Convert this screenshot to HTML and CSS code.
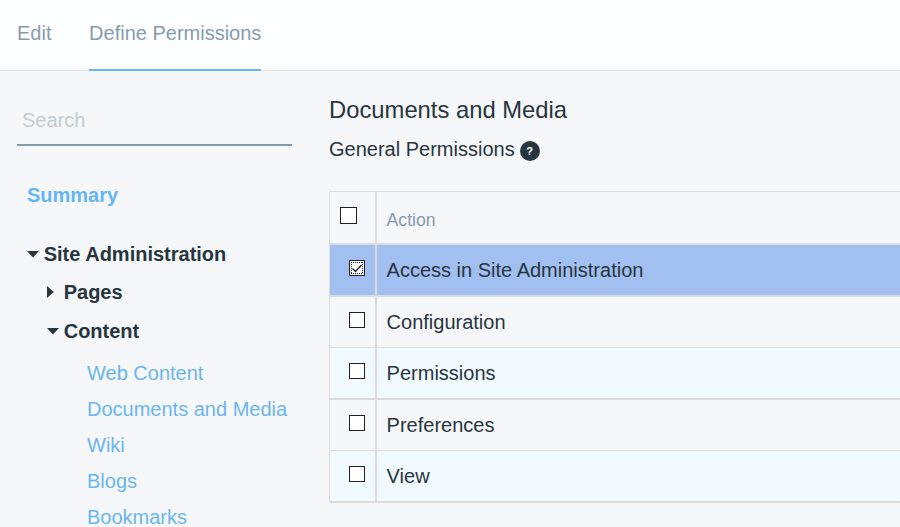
FILE: index.html
```html
<!DOCTYPE html>
<html lang="en">
<head>
<meta charset="utf-8">
<title>Define Permissions</title>
<link rel="stylesheet" href="styles.css">
</head>
<body>
<nav class="tabs">
  <a class="tab">Edit</a>
  <a class="tab active">Define Permissions</a>
</nav>
<div class="layout">
  <aside class="sidebar">
    <input class="search" type="text" placeholder="Search">
    <a class="summary">Summary</a>
    <div class="node site"><svg class="caret" viewBox="0 0 12 12"><path d="M0 3h12L6 9.5z"/></svg><span>Site Administration</span></div>
    <div class="node child pages"><svg class="caret" viewBox="0 0 12 12"><path d="M0 0v12l6.8-6z"/></svg><span>Pages</span></div>
    <div class="node child"><svg class="caret" viewBox="0 0 12 12"><path d="M0 3h12L6 9.5z"/></svg><span>Content</span></div>
    <ul class="links">
      <li>Web Content</li>
      <li>Documents and Media</li>
      <li>Wiki</li>
      <li>Blogs</li>
      <li>Bookmarks</li>
    </ul>
  </aside>
  <main class="main">
    <h1 class="title">Documents and Media</h1>
    <h2 class="subtitle"><span>General Permissions</span><span class="help">?</span></h2>
    <div class="table">
      <div class="row head thick"><div class="check"><span class="box"></span></div><div class="cell">Action</div></div>
      <div class="row selected thick"><div class="check"><span class="box checked"><svg viewBox="0 0 16 16"><path class="focus" d="M2 2.5h12M2 13.5h12M2.5 2v12M13.5 2v12"/><path class="tick" d="M3.5 8.5l3 3 6-6.5"/></svg></span></div><div class="cell">Access in Site Administration</div></div>
      <div class="row"><div class="check"><span class="box"></span></div><div class="cell">Configuration</div></div>
      <div class="row alt thick"><div class="check"><span class="box"></span></div><div class="cell">Permissions</div></div>
      <div class="row"><div class="check"><span class="box"></span></div><div class="cell">Preferences</div></div>
      <div class="row alt thick"><div class="check"><span class="box"></span></div><div class="cell">View</div></div>
    </div>
  </main>
</div>
</body>
</html>
```
FILE: styles.css
```css
* { box-sizing: border-box; }
body {
  margin: 0;
  height: 527px;
  overflow: hidden;
  background: #f5f7f9;
  color: #27353f;
  font: 20px/24px "Liberation Sans", Arial, sans-serif;
}
.tabs {
  display: flex;
  gap: 37.6px;
  height: 71px;
  padding-left: 17px;
  background: #fdfeff;
  border-bottom: 1px solid #dfe2e5;
}
.tab {
  height: 71px;
  padding-top: 21px;
  color: #869cad;
}
.active { width: 172px; white-space: nowrap; border-bottom: 2px solid #65b6f0; }
.layout { display: flex; }
.sidebar { width: 329px; flex: none; padding: 25px 0 0 17px; }
.search {
  display: block;
  width: 275px;
  height: 50px;
  padding: 0 5px;
  border: 0;
  border-bottom: 2px solid #869cad;
  background: transparent;
  font: inherit;
}
.search::placeholder { color: #c1cdd5; opacity: 1; }
.summary {
  display: block;
  margin: 37px 0 35px 10px;
  color: #65b6f0;
  font-weight: bold;
}
.node {
  display: flex;
  align-items: center;
  gap: 5px;
  margin-left: 9.7px;
  font-weight: bold;
}
.site { margin-bottom: 14px; }
.pages { margin-bottom: 15px; }
.child { margin-left: 29.7px; }
.caret { width: 12px; height: 12px; fill: #27353f; }
.links {
  margin: 12px 0 0 70px;
  padding: 0;
  list-style: none;
  line-height: 36px;
  color: #6bb5f0;
}
.main { flex: 1; padding-top: 25px; }
.title { margin: 0; font-size: 23.8px; font-weight: normal; line-height: 28px; }
.subtitle {
  display: flex;
  align-items: center;
  gap: 5px;
  height: 24px;
  margin: 13px 0 30px;
  font-size: 20px;
  font-weight: normal;
}
.help {
  width: 20px;
  height: 20px;
  margin-top: 4px;
  border-radius: 50%;
  background: #27353f;
  color: #fff;
  font-size: 11px;
  font-weight: bold;
  line-height: 20px;
  text-align: center;
}
.table { border: solid #dadcde; border-width: 1px 0 0 1px; }
.row { display: flex; height: 51px; border-bottom: 1px solid #dadcde; }
.thick { height: 52px; border-bottom-width: 2px; }
.alt { background: #f1faff; }
.selected { background: #a2bff1; }
.check { width: 47px; border-right: 2px solid #dadcde; padding: 15px 0 0 19px; }
.cell { padding: 13px 0 0 9.6px; }
.box { display: block; width: 16px; height: 16px; border: 1px solid #222; background: #fff; }
.checked { border: 0; }
.checked svg { display: block; width: 16px; height: 16px; outline: 1px solid #222; outline-offset: -1px; fill: none; stroke: #222; }
.focus { stroke-dasharray: 1 1; }
.tick { stroke-width: 1.4; }
.head { height: 53px; }
.head .check { padding-left: 10px; }
.head .box { width: 17px; height: 17px; }
.head .cell { padding-top: 16px; color: #869cad; font-size: 17.6px; }
```
